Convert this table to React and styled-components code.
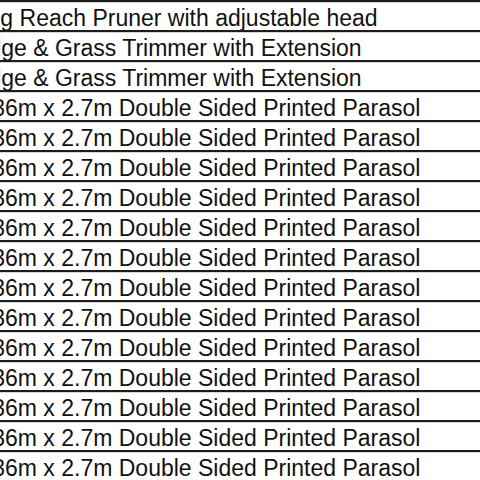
import React from "react";
import styled, { createGlobalStyle } from "styled-components";

const Global = createGlobalStyle`
  html, body { margin: 0; padding: 0; background: #ffffff; }
  body { width: 480px; height: 480px; overflow: hidden; }
`;

const Sheet = styled.div`
  width: 480px;
  height: 480px;
  overflow: hidden;
  background: #ffffff;
  display: flex;
  flex-direction: column;
`;

const Row = styled.div`
  flex: 0 0 30px;
  height: 30px;
  box-sizing: border-box;
  border-top: 2px solid #1c1c1c;
  box-shadow: inset 0 1px 0 #d6d6d6;
  display: flex;
  align-items: center;
  overflow: hidden;
  white-space: nowrap;
`;

const Cell = styled.div`
  font-family: "Liberation Sans", Arial, sans-serif;
  font-size: 23px;
  line-height: 28px;
  color: #111111;
  margin-left: ${(p) => p.$indent}px;
  padding-top: 3px;
`;

const rows = [
  { text: "Long Reach Pruner with adjustable head", indent: -38 },
  { text: "Hedge & Grass Trimmer with Extension", indent: -41 },
  { text: "Hedge & Grass Trimmer with Extension", indent: -41 },
  ...Array.from({ length: 13 }, () => ({
    text: "2.36m x 2.7m Double Sided Printed Parasol",
    indent: -27,
  })),
];

export default function App() {
  return (
    <>
      <Global />
      <Sheet>
        {rows.map((r, i) => (
          <Row key={i}>
            <Cell $indent={r.indent}>{r.text}</Cell>
          </Row>
        ))}
      </Sheet>
    </>
  );
}
